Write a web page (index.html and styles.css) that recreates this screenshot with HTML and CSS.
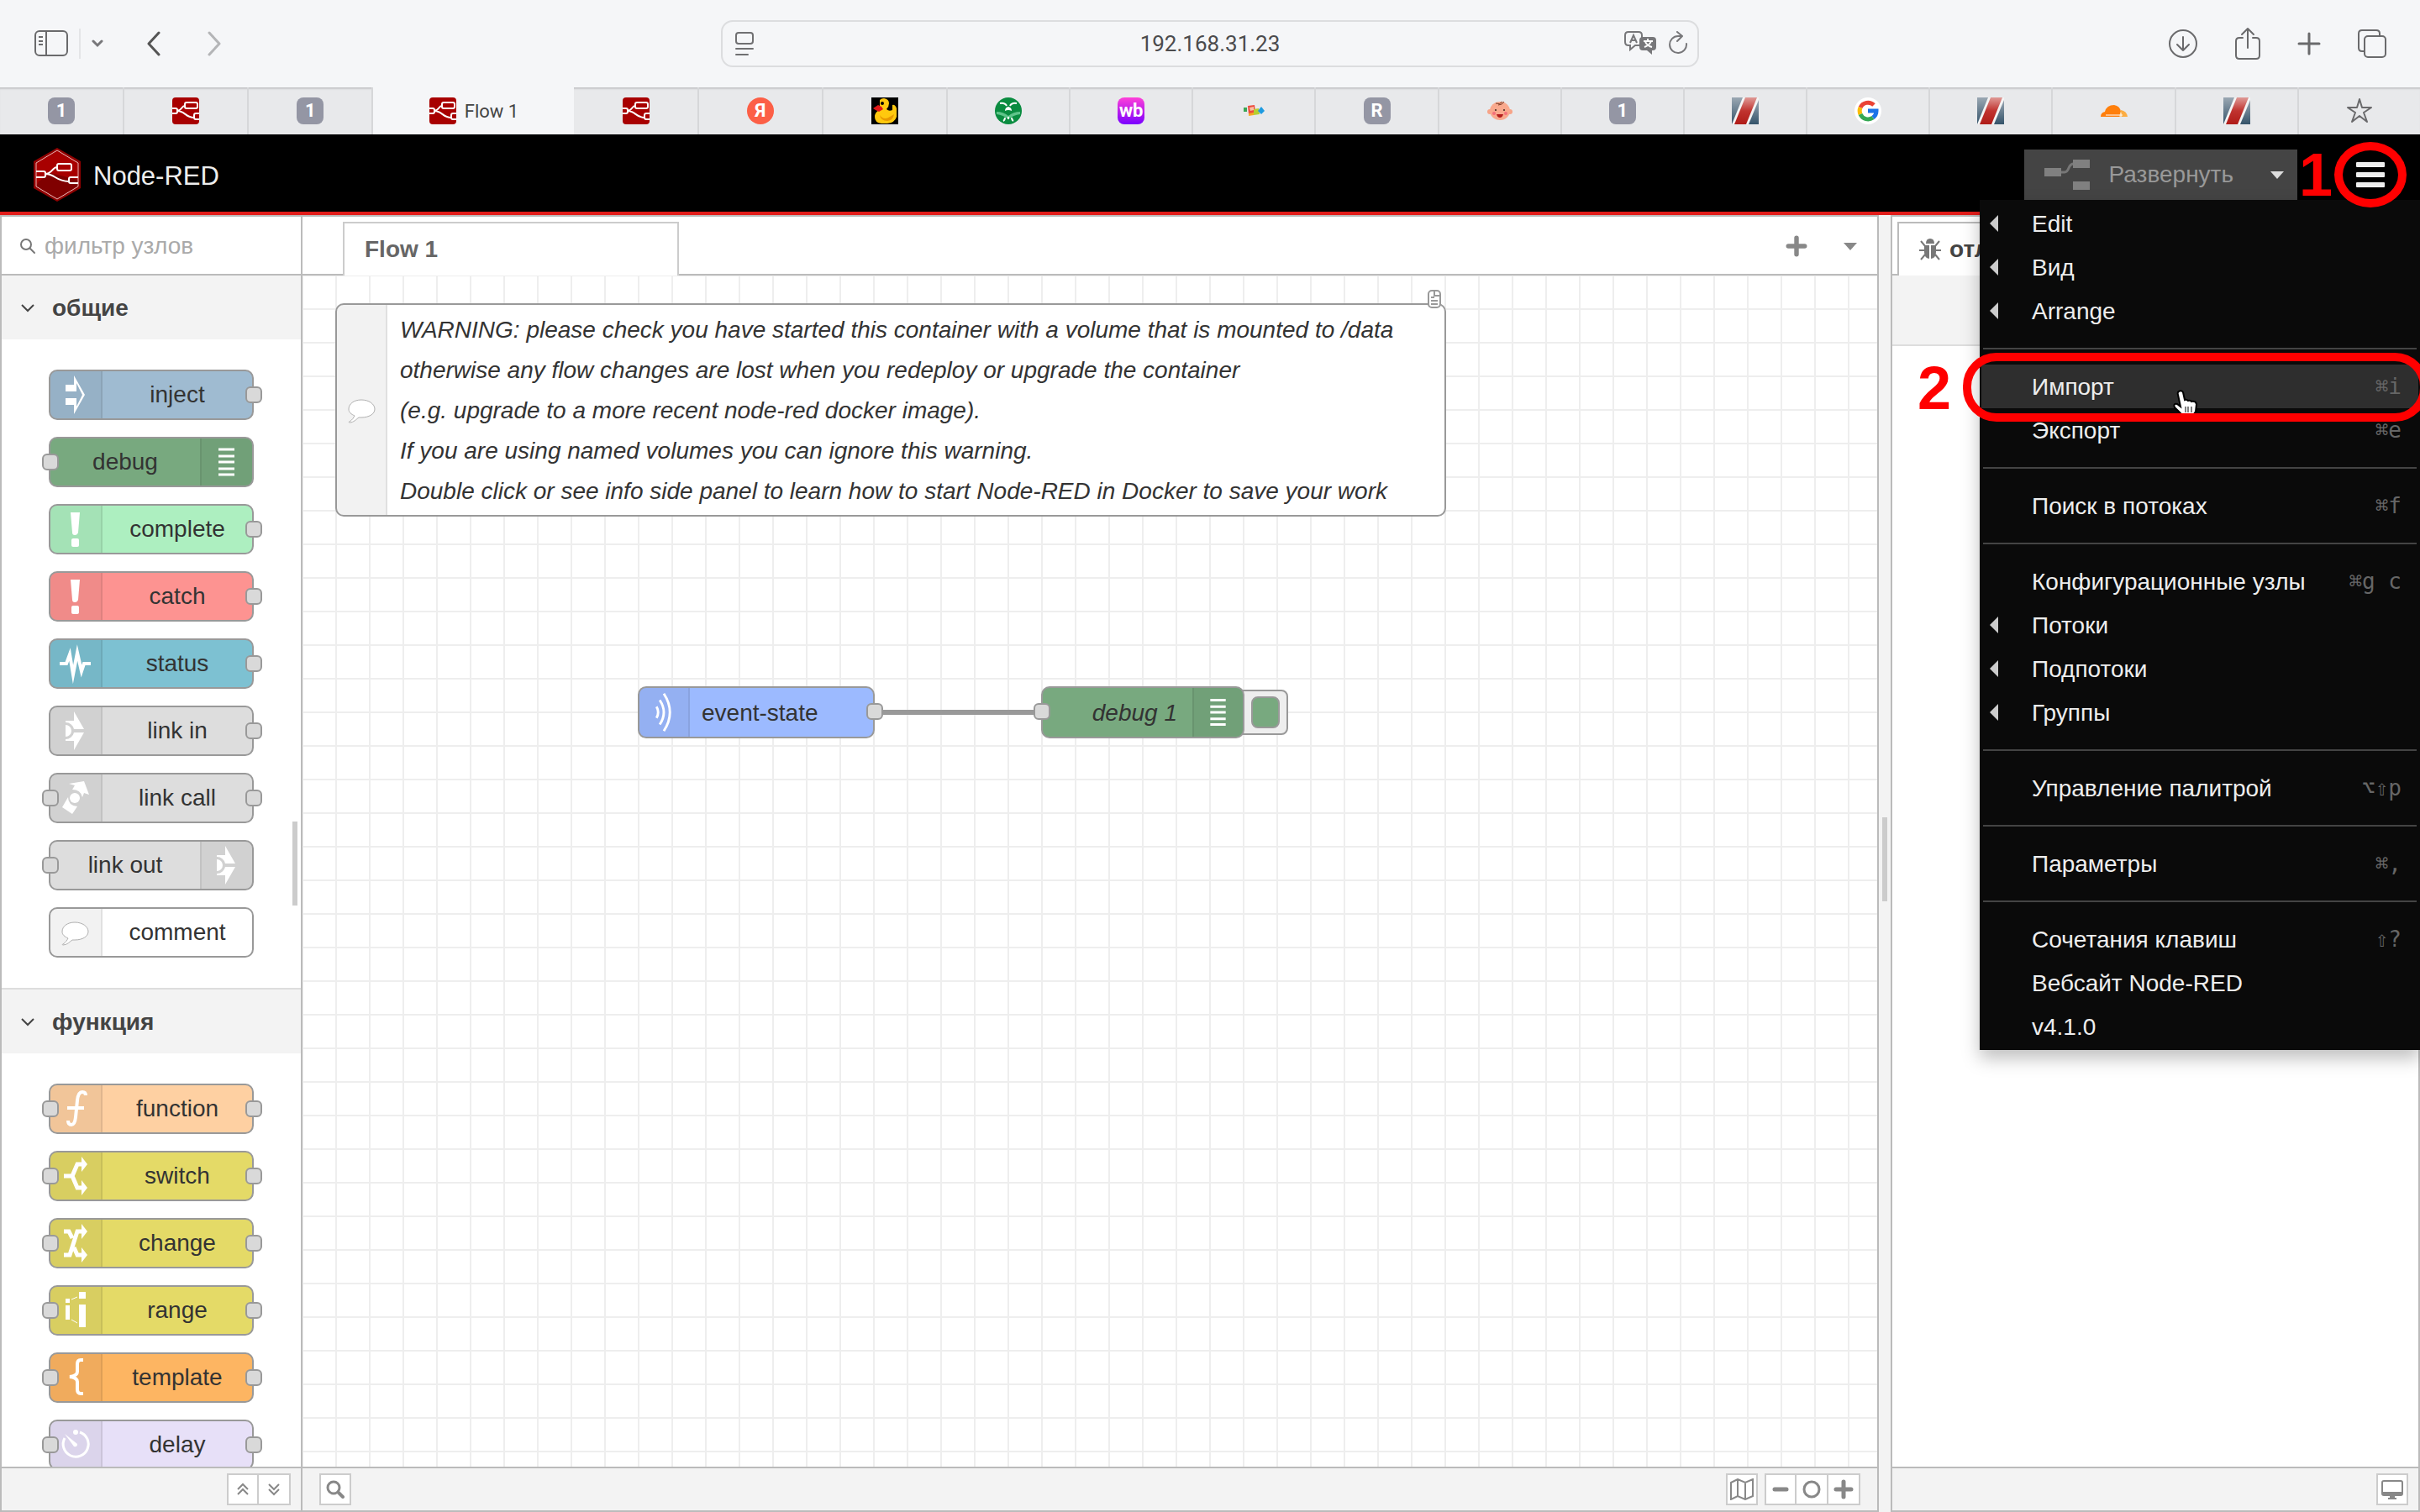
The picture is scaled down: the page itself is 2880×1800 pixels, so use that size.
FILE: index.html
```html
<!DOCTYPE html>
<html lang="ru">

<head>
  <meta charset="utf-8">
  <title>Node-RED : Flow 1</title>
  <link rel="stylesheet" href="styles.css">
</head>

<body>

  <!-- shared icons -->
  <svg class="symbols" aria-hidden="true">
    <symbol id="fav-nodered" viewBox="0 0 32 32">
      <rect width="32" height="32" rx="4" fill="#a80000"/>
      <g fill="none" stroke="#fff" stroke-width="2">
        <rect x="15" y="6" width="15" height="7" rx="2"/>
        <path d="M0 13h4q2 0 2 2v2q0 2-2 2H0M32 19h-4q-2 0-2 2v3q0 2 2 2h4M6 16c5 0 5-6 9-6M6 16c9 0 10 8 20 8"/>
      </g>
    </symbol>
    <symbol id="fav-bars" viewBox="0 0 32 32">
      <linearGradient id="steel" x1="0" y1="0" x2="0" y2="1"><stop offset="0" stop-color="#9ba8b3"/><stop offset="1" stop-color="#34536a"/></linearGradient>
      <linearGradient id="ruby" x1="0" y1="0" x2="0" y2="1"><stop offset="0" stop-color="#df9a96"/><stop offset=".5" stop-color="#c0332f"/><stop offset="1" stop-color="#b01c18"/></linearGradient>
      <rect width="32" height="32" fill="#f4f4f4"/>
      <path d="M0 0h13L0 32z" fill="url(#steel)"/>
      <path d="M16 0h14L17 32H3z" fill="url(#ruby)"/>
      <path d="M32 3v29H20z" fill="url(#steel)"/>
    </symbol>
    <symbol id="i-exclaim" viewBox="0 0 60 56">
      <path d="M24 8h11l-2 24q-1 3-4 3t-3-3z" fill="#fff"/><rect x="25" y="39" width="9" height="10" rx="2" fill="#fff"/>
    </symbol>
    <symbol id="i-debug" viewBox="0 0 60 56">
      <path d="M20 13h19M20 21h19M20 28h19M20 36h19M20 43h19" stroke="#fff" stroke-width="3"/>
    </symbol>
    <symbol id="i-link" viewBox="0 0 60 56">
      <path d="M18 16h10V5l12 21H28A10 10 0 0 0 18 18zM18 40h10v11l12-21H28a10 10 0 0 1-10 8z" fill="#fff"/>
      <path d="M18 21a7 7 0 0 1 0 14z" fill="#fff"/>
    </symbol>
    <symbol id="i-comment" viewBox="0 0 60 56">
      <path d="M29 16c9 0 16 5 16 11s-7 10-16 10h-3c-3 2-6 6-11 6-1 0-1-1 0-1 3-2 5-5 6-7-4-2-7-4-7-8 0-6 6-11 15-11z" fill="#fff" stroke="#b0b0b0" stroke-width="1"/>
    </symbol>
    <symbol id="i-chevron" viewBox="0 0 16 10"><path d="M1 1l7 7 7-7" fill="none" stroke="#444" stroke-width="2"/></symbol>
    <symbol id="i-search" viewBox="0 0 22 22"><circle cx="9" cy="9" r="7" fill="none" stroke="#888" stroke-width="3"/><path d="M15 15l5 5" stroke="#888" stroke-width="4" stroke-linecap="round"/></symbol>
    <symbol id="i-plus" viewBox="0 0 24 24"><path d="M12 3v18M3 12h18" stroke="#888" stroke-width="5" stroke-linecap="round"/></symbol>
  </svg>

  <div class="browser">
    <div class="toolbar">
      <div class="toolbar-left">
        <button class="tool" aria-label="Sidebar"><svg width="40" height="32" viewBox="0 0 40 32" fill="none" stroke="#6a6a6c" stroke-width="2"><rect x="1" y="1" width="38" height="29" rx="5"/><path d="M14 1v29M5 8h5M5 13h5M5 17h5"/></svg></button>
        <span class="tool-line"></span>
        <button class="tool tool-more" aria-label="Tab groups"><svg width="14" height="10" viewBox="0 0 14 10" fill="none" stroke="#77777a" stroke-width="3" stroke-linecap="round"><path d="M2 2l5 5 5-5"/></svg></button>
        <button class="tool tool-back" aria-label="Back"><svg width="18" height="30" viewBox="0 0 18 30" fill="none" stroke="#555" stroke-width="3" stroke-linecap="round" stroke-linejoin="round"><path d="M15 2L3 15l12 13"/></svg></button>
        <button class="tool tool-next" aria-label="Forward"><svg width="18" height="30" viewBox="0 0 18 30" fill="none" stroke="#b4b5b7" stroke-width="3" stroke-linecap="round" stroke-linejoin="round"><path d="M3 2l12 13L3 28"/></svg></button>
      </div>
      <div class="address">
        <svg width="24" height="30" viewBox="0 0 24 30" fill="none" stroke="#707072" stroke-width="2" stroke-linecap="round"><rect x="2" y="2" width="20" height="13" rx="3"/><path d="M2 21h20M2 28h14"/></svg>
        <input type="text" value="192.168.31.23" aria-label="Address">
        <button class="tool" aria-label="Translate"><svg width="40" height="30" viewBox="0 0 40 30"><path d="M6 1h12q4 0 4 4v8q0 4-4 4h-4l-6 5v-5H6q-4 0-4-4V5q0-4 4-4z" fill="none" stroke="#77777a" stroke-width="2"/><path d="M8 14l4-9 4 9M9 11h6" fill="none" stroke="#77777a" stroke-width="2"/><path d="M23 7h12q4 0 4 4v8q0 4-4 4h-1v5l-6-5h-5q-4 0-4-4v-8q0-4 4-4z" fill="#77777a"/><path d="M24 12h11M29 9v3M33 12q-2 5-8 7M26 13q3 5 8 6" fill="none" stroke="#fff" stroke-width="2"/></svg></button>
        <button class="tool" aria-label="Reload"><svg width="26" height="30" viewBox="0 0 26 30" fill="none" stroke="#77777a" stroke-width="2" stroke-linecap="round" stroke-linejoin="round"><path d="M23 15a10 10 0 1 1-10-9h4M12 1l6 5-6 6"/></svg></button>
      </div>
      <div class="toolbar-right">
        <button class="tool" aria-label="Downloads"><svg width="36" height="36" viewBox="0 0 36 36" fill="none" stroke="#6a6a6c" stroke-width="2" stroke-linecap="round" stroke-linejoin="round"><circle cx="18" cy="18" r="16"/><path d="M18 10v16M11 19l7 7 7-7"/></svg></button>
        <button class="tool" aria-label="Share"><svg width="32" height="40" viewBox="0 0 32 40" fill="none" stroke="#6a6a6c" stroke-width="2" stroke-linecap="round" stroke-linejoin="round"><path d="M10 13H6q-4 0-4 4v17q0 4 4 4h20q4 0 4-4V17q0-4-4-4h-4M16 25V2M9 9l7-7 7 7"/></svg></button>
        <button class="tool" aria-label="New tab"><svg width="28" height="28" viewBox="0 0 28 28" stroke="#6a6a6c" stroke-width="3" stroke-linecap="round"><path d="M14 2v24M2 14h24"/></svg></button>
        <button class="tool" aria-label="All tabs"><svg width="36" height="36" viewBox="0 0 36 36" fill="none" stroke="#6a6a6c" stroke-width="2"><path d="M9 27H6q-4 0-4-4V6q0-4 4-4h17q4 0 4 4v3"/><rect x="9" y="9" width="25" height="25" rx="4"/></svg></button>
      </div>
    </div>

    <nav class="tabs">
      <a href="#" class="tab wide"><span class="letter">1</span></a>
      <a href="#" class="tab wide"><svg class="fav"><use href="#fav-nodered"/></svg></a>
      <a href="#" class="tab wide"><span class="letter">1</span></a>
      <a href="#" class="tab active"><svg class="fav"><use href="#fav-nodered"/></svg>Flow 1</a>
      <a href="#" class="tab wide"><svg class="fav"><use href="#fav-nodered"/></svg></a>
      <a href="#" class="tab wide"><span class="letter yandex">Я</span></a>
      <a href="#" class="tab wide"><svg class="fav" viewBox="0 0 32 32"><rect width="32" height="32" fill="#000"/><path d="M10 3q2-2 5-2 6 1 6 6 0 4-3 7 3 3 7 1V9q3-1 5 4v10q-2 7-11 8h-7Q4 30 4 23q0-5 5-8l1-2z" fill="#ffc90e"/><path d="M10 21q5 7 12 2l5-3q-1 7-8 8-8 0-9-7z" fill="#e99a00"/><path d="M2 13l6-4 4 2 2 3-5 3-4-2z" fill="#e01818"/><circle cx="13" cy="7" r="2" fill="#000"/></svg></a>
      <a href="#" class="tab"><svg class="fav" viewBox="0 0 32 32"><circle cx="16" cy="16" r="16" fill="#0a8c40"/><path d="M2 17q8 0 14 5 6-5 14-5v3q-8 1-14 6-6-5-14-6z" fill="#5fc48a"/><path d="M6 7q6-1 8 3M26 7q-6-1-8 3M12 24q0 3-2 4M20 24q0 3 2 4M16 23v3" fill="none" stroke="#fff" stroke-width="2"/><path d="M12 16q0-4 4-5 4 1 4 5-4-2-8 0z" fill="#fff"/></svg></a>
      <a href="#" class="tab"><span class="letter wb">wb</span></a>
      <a href="#" class="tab"><svg class="fav" viewBox="0 0 32 32"><path d="M4 12h4v5H4z" fill="#3aa655"/><path d="M9 10l8-1 1 9-8 2z" fill="#ee4b3d"/><path d="M11 12l5-1v4l-4 1z" fill="#f9c1a2"/><path d="M16 14l6-1 1 7-7 1z" fill="#b6cf2f"/><path d="M25 11l4 5-4 4-4-4z" fill="#1e9be0"/><path d="M10 19l6-1v3l-6 1z" fill="#f7a823"/></svg></a>
      <a href="#" class="tab"><span class="letter">R</span></a>
      <a href="#" class="tab"><svg class="fav" viewBox="0 0 32 32"><circle cx="4" cy="17" r="3" fill="#f7a488"/><circle cx="28" cy="17" r="3" fill="#f7a488"/><ellipse cx="16" cy="16" rx="12" ry="11" fill="#f9a98d"/><path d="M11 7q5 2 8-2M14 9q5 0 7-4" fill="none" stroke="#7a3b25" stroke-width="1"/><circle cx="11" cy="15" r="1" fill="#3b2018"/><circle cx="21" cy="15" r="1" fill="#3b2018"/><circle cx="9" cy="19" r="2" fill="#f4707a"/><circle cx="23" cy="19" r="2" fill="#f4707a"/><path d="M12 20h8q-1 4-4 4t-4-4z" fill="#b31d1d"/></svg></a>
      <a href="#" class="tab"><span class="letter">1</span></a>
      <a href="#" class="tab"><svg class="fav"><use href="#fav-bars"/></svg></a>
      <a href="#" class="tab"><svg class="fav" viewBox="0 0 32 32"><circle cx="16" cy="16" r="16" fill="#fff"/><g fill="none" stroke-width="5"><path d="M23 9A10 10 0 0 0 7 12" stroke="#ea4335"/><path d="M7 12a10 10 0 0 0 0 8" stroke="#fbbc05"/><path d="M7 20a10 10 0 0 0 15 4" stroke="#34a853"/><path d="M22 24q4-3 4-8H16" stroke="#1a73e8"/></g></svg></a>
      <a href="#" class="tab"><svg class="fav"><use href="#fav-bars"/></svg></a>
      <a href="#" class="tab"><svg class="fav" viewBox="0 0 32 32"><path d="M0 23q0-5 5-6 2-8 11-8 7 1 8 8l-2 6z" fill="#ff7f0c"/><path d="M24 15q7 1 8 8H22z" fill="#fcad42"/><path d="M6 21h20M24 18v5" stroke="#fff" stroke-width="1"/></svg></a>
      <a href="#" class="tab"><svg class="fav"><use href="#fav-bars"/></svg></a>
      <a href="#" class="tab"><svg class="fav" viewBox="0 0 32 32"><path d="M16 2l3 10h11l-9 6 4 11-9-7-9 7 4-11-9-6h11z" fill="none" stroke="#6a6a6c" stroke-width="2" stroke-linejoin="round"/></svg></a>
    </nav>
  </div>

  <header class="header">
    <svg class="logo" width="56" height="64" viewBox="0 0 56 64">
      <path d="M28 0l28 16v32L28 64 0 48V16z" fill="#8f0000"/>
      <path d="M28 3l25 15v28L28 61 3 46V18z" fill="#a80000"/>
      <path d="M6 40l14-10 33 8v8L28 61 3 46z" fill="#800000"/>
      <path d="M28 3l25 15v28L28 61 3 46V18z" fill="none" stroke="#e9b5b5" stroke-width="1"/>
      <g fill="none" stroke="#fff" stroke-width="2">
        <rect x="28" y="19" width="17" height="8" rx="2" fill="#a80000"/>
        <path d="M3 28h9q2 0 2 2v3q0 2-2 2H3M53 35h-9q-2 0-2 2v3q0 2 2 2h9M14 31c8 0 8-8 14-8M14 31c12 0 12 9 28 9"/>
      </g>
    </svg>
    <span class="brand">Node-RED</span>
    <button class="deploy">
      <svg width="56" height="36" viewBox="0 0 56 36"><path d="M20 15h4q3 0 5-5t6-5" fill="none" stroke="#777" stroke-width="3"/><path d="M0 10h20v10H0zM34 0h20v10H34zM34 26h20v10H34z" fill="#808080"/></svg>
      <span>Развернуть</span>
      <i class="caret"></i>
    </button>
    <span class="step step-one">1</span>
    <button class="menu-button" aria-label="Menu"><i></i><i></i><i></i></button>

    <ul class="menu">
      <li class="sub"><a href="#">Edit</a></li>
      <li class="sub"><a href="#">Вид</a></li>
      <li class="sub"><a href="#">Arrange</a></li>
      <li class="divider"></li>
      <li class="selected">
        <a href="#">Импорт <kbd>⌘i</kbd></a>
        <svg class="hand" width="30" height="34" viewBox="0 0 30 34"><path d="M8 2q3-2 5 1l2 9q2-1 4 1 3-1 4 1 5-1 6 3l-1 9-3 4v3H12v-3l-9-9q-2-5 3-4l4 3L7 6q-1-3 1-4z" fill="#fff" stroke="#000" stroke-width="2"/><path d="M16 20v7M19 20v7M23 20v7" stroke="#000" stroke-width="1"/></svg>
        <span class="mark"></span>
        <span class="step step-two">2</span>
      </li>
      <li><a href="#">Экспорт <kbd>⌘e</kbd></a></li>
      <li class="divider"></li>
      <li><a href="#">Поиск в потоках <kbd>⌘f</kbd></a></li>
      <li class="divider"></li>
      <li><a href="#">Конфигурационные узлы <kbd>⌘g c</kbd></a></li>
      <li class="sub"><a href="#">Потоки</a></li>
      <li class="sub"><a href="#">Подпотоки</a></li>
      <li class="sub"><a href="#">Группы</a></li>
      <li class="divider"></li>
      <li><a href="#">Управление палитрой <kbd>⌥⇧p</kbd></a></li>
      <li class="divider"></li>
      <li><a href="#">Параметры <kbd>⌘,</kbd></a></li>
      <li class="divider"></li>
      <li><a href="#">Сочетания клавиш <kbd>⇧?</kbd></a></li>
      <li><a href="#">Вебсайт Node-RED</a></li>
      <li><a href="#">v4.1.0</a></li>
    </ul>
  </header>

  <main class="editor">

    <section class="palette">
      <div class="filter">
        <label for="filter"><svg width="20" height="20" viewBox="0 0 20 20" fill="none" stroke="#777" stroke-width="2" stroke-linecap="round"><circle cx="8" cy="8" r="6"/><path d="M13 13l5 5"/></svg></label>
        <input id="filter" type="text" placeholder="фильтр узлов" aria-label="фильтр узлов">
      </div>
      <div class="palette-list">
        <button class="category"><svg width="16" height="10"><use href="#i-chevron"/></svg>общие</button>
        <div class="nodes">
          <div class="node inject out"><svg class="icon" viewBox="0 0 60 56"><path d="M28 5l13 23-13 23V40H18v-8h13v10l7-14-7-14v10H18v-8h10z" fill="#fff"/></svg><span>inject</span></div>
          <div class="node debug in"><span>debug</span><svg class="icon right"><use href="#i-debug"/></svg></div>
          <div class="node complete out"><svg class="icon"><use href="#i-exclaim"/></svg><span>complete</span></div>
          <div class="node catch out"><svg class="icon"><use href="#i-exclaim"/></svg><span>catch</span></div>
          <div class="node status out"><svg class="icon" viewBox="0 0 60 56"><path d="M11 28h8l4-11 4 24 5-26 5 22 3-9h8" fill="none" stroke="#fff" stroke-width="4" stroke-miterlimit="10"/></svg><span>status</span></div>
          <div class="node link out"><svg class="icon"><use href="#i-link"/></svg><span>link in</span></div>
          <div class="node link in out"><svg class="icon" viewBox="0 0 60 56"><path d="M14 39l7-12q0 10 11 11l-6 9zM22 11l18-3 6 16-6-2-2 5q-2-9-12-9l3-5z" fill="#fff"/><circle cx="29" cy="28" r="6" fill="#fff"/></svg><span>link call</span></div>
          <div class="node link in"><span>link out</span><svg class="icon right"><use href="#i-link"/></svg></div>
          <div class="node comment"><svg class="icon"><use href="#i-comment"/></svg><span>comment</span></div>
        </div>
        <button class="category ruled"><svg width="16" height="10"><use href="#i-chevron"/></svg>функция</button>
        <div class="nodes">
          <div class="node function in out"><svg class="icon" viewBox="0 0 60 56"><path d="M42 12q0-4-4-4-5 0-6 10l-2 20q-1 9-5 9t-4-5M20 27h20" fill="none" stroke="#fff" stroke-width="4"/></svg><span>function</span></div>
          <div class="node switch in out"><svg class="icon" viewBox="0 0 60 56"><path d="M16 28h11M26 28l6-14h6M26 28l6 14h6" fill="none" stroke="#fff" stroke-width="5"/><path d="M37 5l7 9-7 9zM37 33l7 9-7 9z" fill="#fff"/></svg><span>switch</span></div>
          <div class="node switch in out"><svg class="icon" viewBox="0 0 60 56"><path d="M16 14h6l4 8M16 42h7l9-28h6M28 33l4 9h6" fill="none" stroke="#fff" stroke-width="5"/><path d="M37 5l7 9-7 9zM37 33l7 9-7 9z" fill="#fff"/></svg><span>change</span></div>
          <div class="node switch in out"><svg class="icon" viewBox="0 0 60 56"><path d="M18 14h5v5h-5zM18 22h5v17h-5zM34 6h8v8h-8zM34 21h8v27h-8z" fill="#fff"/><path d="M25 15l7-3M25 39l7 4" stroke="#fff" stroke-width="1"/></svg><span>range</span></div>
          <div class="node template in out"><svg class="icon" viewBox="0 0 60 56"><path d="M39 7h-3q-4 0-4 5v9q0 5-9 6 9 1 9 6v9q0 5 4 5h3" fill="none" stroke="#fff" stroke-width="4"/></svg><span>template</span></div>
          <div class="node delay in out"><svg class="icon" viewBox="0 0 60 56"><path d="M35 13a15 15 0 1 1-18 7" fill="none" stroke="#fff" stroke-width="3"/><path d="M17 15l15 12q0 4-4 3z" fill="#fff"/><circle cx="30" cy="13" r="3" fill="#fff"/></svg><span>delay</span></div>
        </div>
      </div>
      <div class="footer">
        <div class="group">
          <button aria-label="Collapse all"><svg width="16" height="16" viewBox="0 0 16 16" fill="none" stroke="#888" stroke-width="2"><path d="M2 8l6-6 6 6M2 14l6-6 6 6"/></svg></button>
          <button aria-label="Expand all"><svg width="16" height="16" viewBox="0 0 16 16" fill="none" stroke="#888" stroke-width="2"><path d="M2 2l6 6 6-6M2 8l6 6 6-6"/></svg></button>
        </div>
      </div>
      <i class="grip"></i>
    </section>

    <section class="workspace">
      <div class="flow-tabs">
        <a href="#" class="flow-tab">Flow 1</a>
        <div class="flow-actions">
          <button aria-label="Add flow"><svg width="26" height="26"><use href="#i-plus"/></svg></button>
          <button aria-label="List flows"><i class="caret"></i></button>
        </div>
      </div>
      <div class="canvas">
        <div class="warning">
          <svg class="icon" viewBox="0 0 58 56"><use href="#i-comment" width="60" height="56"/></svg>
          <p>WARNING: please check you have started this container with a volume that is mounted to /data<br>
            otherwise any flow changes are lost when you redeploy or upgrade the container<br>
            (e.g. upgrade to a more recent node-red docker image).<br>
            If you are using named volumes you can ignore this warning.<br>
            Double click or see info side panel to learn how to start Node-RED in Docker to save your work</p>
          <svg class="doc" width="16" height="22" viewBox="0 0 16 22" fill="#fff" stroke="#999" stroke-width="2"><rect x="1" y="1" width="14" height="20" rx="4"/><path d="M8 2v5h6M4 9h4M4 13h8M4 17h8"/></svg>
        </div>
        <div class="wire"></div>
        <div class="node event out"><svg class="icon" viewBox="0 0 60 56"><path d="M30 5q15 23 0 46M25 13q10 15 0 30M21 21q4 7 0 14" fill="none" stroke="#fff" stroke-width="3"/></svg><span>event-state</span></div>
        <button class="trigger" aria-label="Toggle debug 1"><i></i></button>
        <div class="node debug-one debug in"><span>debug 1</span><svg class="icon right"><use href="#i-debug"/></svg></div>
      </div>
      <div class="footer">
        <div class="group"><button aria-label="Search"><svg width="22" height="22"><use href="#i-search"/></svg></button></div>
        <div class="group push"><button aria-label="Map"><svg width="28" height="26" viewBox="0 0 28 26" fill="none" stroke="#888" stroke-width="2"><path d="M1 5l8-4 9 4 9-4v20l-9 4-9-4-8 4zM9 1v20M18 5v20"/></svg></button></div>
        <div class="group">
          <button aria-label="Zoom out"><svg width="24" height="24" viewBox="0 0 24 24"><path d="M5 12h14" stroke="#888" stroke-width="5" stroke-linecap="round"/></svg></button>
          <button aria-label="Reset zoom"><svg width="24" height="24" viewBox="0 0 24 24"><circle cx="12" cy="12" r="9" fill="none" stroke="#888" stroke-width="3"/></svg></button>
          <button aria-label="Zoom in"><svg width="24" height="24"><use href="#i-plus"/></svg></button>
        </div>
      </div>
    </section>

    <div class="separator"><i></i></div>

    <aside class="sidebar">
      <div class="side-tabs">
        <a href="#" class="side-tab"><svg width="26" height="26" viewBox="0 0 26 26"><path d="M8 6q0-6 5-6t5 6z" fill="#777"/><path d="M6 8h6v16q-6-1-6-8zM14 8h6v8q0 7-6 8z" fill="#777"/><path d="M2 3l5 6M24 3l-5 6M0 14h7M26 14h-7M2 25l5-6M24 25l-5-6" stroke="#777" stroke-width="2"/></svg>отладка</a>
      </div>
      <div class="side-toolbar"></div>
      <div class="side-content"></div>
      <div class="footer">
        <div class="group push"><button aria-label="Open in window"><svg width="28" height="24" viewBox="0 0 28 24"><rect x="2" y="2" width="24" height="17" rx="2" fill="#fff" stroke="#888" stroke-width="2"/><path d="M2 15h24v4H2zM11 19h6v3h2v2H9v-2h2z" fill="#888"/></svg></button></div>
      </div>
    </aside>

  </main>
</body>

</html>
```

FILE: styles.css
```css
*,
*::before,
*::after {
  box-sizing: border-box;
}
body {
  margin: 0;
  height: 100vh;
  display: flex;
  flex-direction: column;
  overflow: hidden;
  background: #f3f3f3;
  color: #333;
  font-family: "Liberation Sans", Arial, sans-serif;
  font-size: 28px;
}
a {
  color: inherit;
  text-decoration: none;
}
button {
  padding: 0;
  border: 0;
  background: none;
  color: inherit;
  font: inherit;
  cursor: pointer;
}
input {
  min-width: 0;
  padding: 0;
  border: 0;
  outline: 0;
  background: none;
  font: inherit;
}
svg {
  display: block;
  flex: none;
}
.symbols {
  position: absolute;
  width: 0;
  height: 0;
}

/* browser window */
.browser {
  font-family: Roboto, sans-serif;
  background: #f5f6f8;
}
.toolbar {
  height: 104px;
  display: grid;
  grid-template-columns: 1fr minmax(0, 1164px) 1fr;
  align-items: center;
  padding: 0 39px;
}
.toolbar-left,
.toolbar-right {
  display: flex;
  align-items: center;
}
.toolbar-left {
  padding-left: 2px;
}
.toolbar-right {
  justify-content: flex-end;
  gap: 43px;
}
.tool-line {
  width: 2px;
  height: 36px;
  margin: 0 13px;
  background: #e4e5e7;
}
.tool-back {
  margin-left: 51px;
}
.tool-next {
  margin-left: 54px;
}
.address {
  height: 56px;
  display: flex;
  align-items: center;
  gap: 12px;
  padding: 0 10px 0 14px;
  border: 2px solid #dcdddf;
  border-radius: 14px;
}
.address input {
  flex: 1;
  padding-left: 50px;
  font-size: 26px;
  color: #4b4b4d;
  text-align: center;
}
.tabs {
  height: 56px;
  display: flex;
  background: #e8e9eb;
  box-shadow: inset 0 3px 2px -1px #c6c7c9;
}
.tab {
  flex: 146 1 0;
  display: flex;
  align-items: center;
  justify-content: center;
  gap: 10px;
  border-right: 2px solid #d6d7d9;
  font-size: 22px;
  color: #444;
}
.tab.wide {
  flex-grow: 148;
}
.tab.active {
  flex-grow: 242;
  border-right: 0;
  background: #f5f6f8;
}
.tab:last-child {
  border: 0;
}
.fav {
  width: 32px;
  height: 32px;
}
.letter {
  width: 32px;
  height: 32px;
  border-radius: 8px;
  background: #9496a4;
  color: #fff;
  font-weight: bold;
  font-size: 22px;
  line-height: 32px;
  text-align: center;
}
.yandex {
  border-radius: 50%;
  background: #fc5f46;
}
.wb {
  background: linear-gradient(#ff40d8, #7a00ff);
}

/* header */
.header {
  position: relative;
  z-index: 2;
  height: 96px;
  display: flex;
  align-items: center;
  background: #000;
  border-bottom: 4px solid #e11d1a;
  padding: 4px 16px 0 40px;
}
.brand {
  margin-left: 15px;
  padding-top: 4px;
  font-size: 31px;
  color: #eee;
}
.deploy {
  height: 60px;
  margin-left: auto;
  padding: 0 16px 0 24px;
  display: flex;
  align-items: center;
  background: #444;
  color: #999;
}
.deploy span {
  margin: 0 44px 0 21px;
}
.caret {
  display: block;
  border: 8px solid transparent;
  border-top: 9px solid #888;
  border-bottom: 0;
}
.deploy .caret {
  border-top-color: #ddd;
}
.step {
  color: #f00;
  font-size: 72px;
  line-height: 72px;
  font-weight: bold;
}
.step-one {
  width: 44px;
  text-align: center;
}
.menu-button {
  position: relative;
  z-index: 3;
  width: 86px;
  height: 78px;
  display: flex;
  flex-direction: column;
  align-items: center;
  justify-content: center;
  gap: 6px;
  border: 10px solid #f00;
  border-radius: 50%;
}
.menu-button i {
  width: 34px;
  height: 6px;
  border-radius: 1px;
  background: #eee;
}
.menu {
  position: absolute;
  top: 78px;
  right: 0;
  width: 524px;
  margin: 0;
  padding: 2px;
  list-style: none;
  background: #0a0a0a;
  color: #eee;
  box-shadow: 0 10px 20px rgba(0, 0, 0, .25);
}
.menu li {
  position: relative;
}
.menu a {
  height: 52px;
  display: flex;
  align-items: center;
  justify-content: space-between;
  padding: 2px 20px 0 60px;
}
.menu kbd {
  font-family: "DejaVu Sans Mono", "DejaVu Sans", monospace;
  font-size: 26px;
  line-height: 32px;
  padding-bottom: 2px;
  color: #666;
  white-space: pre;
}
.menu .divider {
  height: 2px;
  margin: 18px 2px;
  background: #444;
}
.menu .sub::before {
  content: "";
  position: absolute;
  left: 10px;
  top: 16px;
  border: 10px solid transparent;
  border-right-color: #ccc;
  border-left: 0;
}
.menu .selected {
  z-index: 1;
  background: #2e2e2e;
}
.mark {
  position: absolute;
  top: -14px;
  bottom: -16px;
  left: -22px;
  right: -12px;
  border: 10px solid #f00;
  border-radius: 40px;
}
.hand {
  position: absolute;
  top: 30px;
  left: 227px;
}
.step-two {
  position: absolute;
  top: -8px;
  left: -76px;
}

/* editor */
.editor {
  flex: 1;
  min-height: 0;
  display: flex;
}
.palette,
.workspace,
.sidebar {
  display: flex;
  flex-direction: column;
  border: 2px solid #bbb;
  background: #fff;
}
.palette {
  position: relative;
  width: 360px;
}
.filter {
  height: 70px;
  display: flex;
  align-items: center;
  gap: 10px;
  padding: 2px 12px 0 21px;
  border-bottom: 2px solid #bbb;
}
.filter input {
  flex: 1;
}
.filter input::placeholder {
  color: #aaa;
}
.palette-list {
  flex: 1;
  min-height: 0;
  overflow: hidden;
}
.category {
  width: 100%;
  height: 76px;
  display: flex;
  align-items: center;
  gap: 21px;
  padding: 2px 0 0 23px;
  background: #f3f3f3;
  color: #444;
  font-weight: bold;
}
.category.ruled {
  height: 78px;
  border-top: 2px solid #ddd;
}
.nodes {
  display: flex;
  flex-direction: column;
  gap: 20px;
  padding: 36px 56px;
}
.node {
  position: relative;
  height: 60px;
  display: flex;
  border: 2px solid #999;
  border-radius: 10px;
  background: #ddd;
}
.node span {
  flex: 1;
  line-height: 56px;
  text-align: center;
}
.icon {
  width: 62px;
  height: 56px;
  background: rgba(0, 0, 0, .05);
  border-right: 2px solid rgba(0, 0, 0, .08);
  border-radius: 8px 0 0 8px;
}
.icon.right {
  border-right: 0;
  border-left: 2px solid rgba(0, 0, 0, .08);
  border-radius: 0 8px 8px 0;
}
.node.in::before,
.node.out::after {
  content: "";
  position: absolute;
  top: 18px;
  width: 20px;
  height: 20px;
  border: 2px solid #999;
  border-radius: 6px;
  background: #d9d9d9;
}
.node.in::before {
  left: -10px;
}
.node.out::after {
  right: -12px;
}
.inject { background: #9fbbd1; }
.debug { background: #78a97f; }
.complete { background: #adefc0; }
.catch { background: #fd9391; }
.status { background: #7dc1d2; }
.comment { background: #fff; }
.function { background: #fed0a2; }
.switch { background: #e4da67; }
.template { background: #fdb562; }
.delay { background: #e7e0f8; }
.event { background: #9cbaff; }

.grip {
  position: absolute;
  right: 4px;
  top: 720px;
  width: 6px;
  height: 100px;
  background: #ccc;
}
.footer {
  height: 52px;
  display: flex;
  align-items: center;
  gap: 8px;
  padding: 0 12px;
  border-top: 2px solid #bbb;
  background: #f3f3f3;
}
.palette .footer {
  justify-content: flex-end;
}
.workspace .footer {
  padding: 0 20px;
}
.push {
  margin-left: auto;
}
.group {
  display: flex;
  border: 2px solid #ccc;
  background: #fff;
}
.group button {
  width: 34px;
  height: 34px;
  display: flex;
  align-items: center;
  justify-content: center;
}
.group button + button {
  width: 38px;
  border-left: 2px solid #ccc;
}

.workspace {
  flex: 1;
  min-width: 0;
  border-left: 0;
}
.flow-tabs {
  height: 70px;
  display: flex;
  align-items: flex-end;
  padding-left: 48px;
  box-shadow: inset 0 -2px #bbb;
}
.flow-tab {
  width: 400px;
  height: 64px;
  padding-left: 24px;
  border: 2px solid #ccc;
  border-bottom: 0;
  background: #fff;
  color: #666;
  font-weight: bold;
  line-height: 62px;
}
.flow-actions {
  height: 70px;
  margin-left: auto;
  display: flex;
  align-items: center;
  gap: 43px;
  padding-right: 24px;
}
.canvas {
  position: relative;
  flex: 1;
  background-image: linear-gradient(#eee 2px, transparent 2px), linear-gradient(90deg, #eee 2px, transparent 2px);
  background-size: 40px 40px;
  background-position: -1px -1px;
}
/* things placed on the canvas */
.warning {
  position: absolute;
  left: 39px;
  top: 33px;
  width: 1322px;
  display: flex;
  border: 2px solid #999;
  border-radius: 10px;
  background: #fff;
}
.warning p {
  margin: 0;
  padding: 6px 0 4px 15px;
  font-style: italic;
  line-height: 48px;
  white-space: nowrap;
}
.doc {
  position: absolute;
  right: 4px;
  top: -18px;
}
.canvas .node {
  position: absolute;
  top: 489px;
  height: 62px;
}
.event {
  left: 399px;
  width: 282px;
}
.canvas .node span {
  line-height: 60px;
}
.canvas .event span {
  padding-left: 14px;
  text-align: left;
}
.debug-one {
  left: 879px;
  width: 242px;
}
.canvas .debug-one span {
  padding-right: 18px;
  font-style: italic;
  text-align: right;
}
.canvas .node.in::before {
  left: -11px;
}
.canvas .icon {
  width: 60px;
  height: 58px;
}
.canvas .warning .icon {
  height: auto;
}
.wire {
  position: absolute;
  left: 681px;
  top: 517px;
  width: 198px;
  height: 6px;
  background: #999;
}
.trigger {
  position: absolute;
  left: 1110px;
  top: 493px;
  width: 63px;
  height: 54px;
  display: flex;
  align-items: center;
  justify-content: flex-end;
  padding-right: 8px;
  border: 2px solid #999;
  border-radius: 8px;
  background: #eee;
}
.trigger i {
  width: 34px;
  height: 38px;
  border: 2px solid #999;
  border-radius: 8px;
  background: #78a97f;
}

.separator {
  width: 14px;
  padding-bottom: 10px;
  display: flex;
  align-items: center;
  justify-content: center;
}
.separator i {
  width: 6px;
  height: 100px;
  background: #ccc;
}
.sidebar {
  width: 630px;
}
.side-tabs {
  height: 70px;
  display: flex;
  align-items: flex-end;
  padding-left: 6px;
  box-shadow: inset 0 -2px #bbb;
}
.side-tab {
  width: 300px;
  height: 64px;
  display: flex;
  align-items: center;
  gap: 10px;
  padding-left: 24px;
  border: 2px solid #bbb;
  border-bottom: 0;
  background: #fff;
  color: #444;
  font-weight: bold;
}
.side-toolbar {
  height: 84px;
  background: #f3f3f3;
  border-bottom: 2px solid #ddd;
}
.side-content {
  flex: 1;
}
```
